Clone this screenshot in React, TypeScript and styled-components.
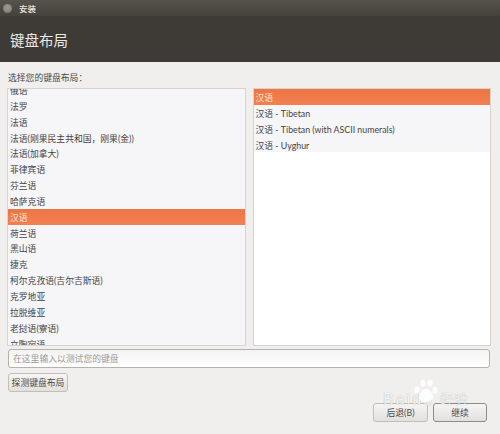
import React from 'react';
import styled, { createGlobalStyle } from 'styled-components';

const GlobalStyle = createGlobalStyle`
  html, body {
    margin: 0;
    padding: 0;
    background: #f0efed;
  }
  * {
    box-sizing: border-box;
  }
`;

const Window = styled.div`
  position: relative;
  width: 500px;
  height: 434px;
  overflow: hidden;
  background: #f0efed;
  color: #3c3c3c;
  font-family: Lato, 'Noto Sans CJK SC', sans-serif;
  font-size: 8.8px;
`;

const TitleBar = styled.div`
  height: 16px;
  padding-left: 3px;
  display: flex;
  align-items: center;
  gap: 7px;
  background: linear-gradient(#57534c, #45413b);
  color: #e8e6e0;
  font-size: 8.5px;
  font-weight: 500;
`;

const CloseDot = styled.div`
  width: 9px;
  height: 9px;
  border-radius: 50%;
  background: radial-gradient(circle at 50% 40%, #a09c95, #77736c);
`;

const Banner = styled.div`
  height: 46px;
  padding: 1px 0 0 10px;
  display: flex;
  align-items: center;
  background: #3e3a35;
  color: #ece9e4;
  font-size: 14.5px;
`;

const Content = styled.div`
  padding: 10px 9px 0 7px;
`;

const Prompt = styled.div`
  height: 16px;
  padding-left: 1px;
  line-height: 12px;
  color: #4a4a4a;
`;

const Lists = styled.div`
  display: flex;
  gap: 7px;
`;

const ListBox = styled.div`
  width: 239px;
  height: 258px;
  overflow: hidden;
  background: #fff;
  border: 1px solid #d8d4cd;
`;

const ScrolledRows = styled.div`
  margin-top: -7px;
`;

const Row = styled.div<{ $selected?: boolean }>`
  height: 15.85px;
  padding-left: 2px;
  line-height: 17px;
  white-space: nowrap;
  background: ${(props) =>
    props.$selected ? 'linear-gradient(#ee7545, #f28052)' : '#f6f5f8'};
  color: ${(props) => (props.$selected ? '#fbe6da' : '#444')};
`;

const TestInput = styled.div`
  width: 482px;
  height: 19px;
  margin: 3px 0 0 1px;
  padding-left: 4px;
  line-height: 17px;
  color: #999;
  background: linear-gradient(#f4f3f3, #fff);
  border: 1px solid #b5b1ab;
  border-radius: 3px;
`;

const Button = styled.div<{ $width: number; $focused?: boolean }>`
  width: ${(props) => props.$width}px;
  height: 19px;
  display: flex;
  align-items: center;
  justify-content: center;
  background: linear-gradient(#f6f5f4, #e2e0dd);
  border: 1px solid ${(props) => (props.$focused ? '#8f8b85' : '#c2beb8')};
  border-radius: 3px;
  color: #4a4a4a;
`;

const DetectRow = styled.div`
  margin: 5px 0 0 1px;
`;

const Actions = styled.div`
  margin: 11px 4px 0 0;
  display: flex;
  justify-content: flex-end;
  gap: 5px;
`;

const Watermark = styled.div`
  position: absolute;
  left: 383px;
  top: 378px;
  width: 90px;
  height: 34px;
  color: rgba(255, 255, 255, 0.85);
  text-shadow: 0 0 1px rgba(0, 0, 0, 0.3);
  pointer-events: none;
`;

const BrandWord = styled.span`
  position: absolute;
  left: 0;
  top: 14px;
  font-family: 'Liberation Sans', sans-serif;
  font-size: 16px;
  line-height: 16px;
  letter-spacing: 2px;
`;

const Paw = styled.svg`
  position: absolute;
  left: 30px;
  top: 1px;
`;

const BrandTag = styled.span`
  position: absolute;
  left: 57px;
  top: 13px;
  font-family: 'Noto Sans CJK SC', sans-serif;
  font-size: 14px;
  line-height: 15px;
`;

const layouts = [
  '俄语',
  '法罗',
  '法语',
  '法语(刚果民主共和国，刚果(金))',
  '法语(加拿大)',
  '菲律宾语',
  '芬兰语',
  '哈萨克语',
  '汉语',
  '荷兰语',
  '黑山语',
  '捷克',
  '柯尔克孜语(吉尔吉斯语)',
  '克罗地亚',
  '拉脱维亚',
  '老挝语(寮语)',
  '立陶宛语',
];

const variants = ['汉语', '汉语 - Tibetan', '汉语 - Tibetan (with ASCII numerals)', '汉语 - Uyghur'];

const App: React.FC = () => (
  <Window>
    <GlobalStyle />
    <TitleBar>
      <CloseDot />
      安装
    </TitleBar>
    <Banner>键盘布局</Banner>
    <Content>
      <Prompt>选择您的键盘布局：</Prompt>
      <Lists>
        <ListBox>
          <ScrolledRows>
            {layouts.map((name) => (
              <Row key={name} $selected={name === '汉语'}>
                {name}
              </Row>
            ))}
          </ScrolledRows>
        </ListBox>
        <ListBox>
          {variants.map((name, index) => (
            <Row key={name} $selected={index === 0}>
              {name}
            </Row>
          ))}
        </ListBox>
      </Lists>
      <TestInput>在这里输入以测试您的键盘</TestInput>
      <DetectRow>
        <Button $width={60}>探测键盘布局</Button>
      </DetectRow>
      <Actions>
        <Button $width={55}>后退(B)</Button>
        <Button $width={54} $focused>
          继续
        </Button>
      </Actions>
    </Content>
    <Watermark>
      <BrandWord>Baidu</BrandWord>
      <Paw width="26" height="24" viewBox="0 0 26 24" fill="rgba(255,255,255,0.85)">
        <ellipse cx="4" cy="11" rx="2.6" ry="3.6" />
        <ellipse cx="10" cy="4" rx="2.6" ry="3.6" />
        <ellipse cx="17" cy="4" rx="2.6" ry="3.6" />
        <ellipse cx="22" cy="11" rx="2.6" ry="3.6" />
        <path d="M13 10c-4 0-7 5-7 8 0 3 3 5 7 5s7-2 7-5c0-3-3-8-7-8z" />
      </Paw>
      <BrandTag>经验</BrandTag>
    </Watermark>
  </Window>
);

export default App;
